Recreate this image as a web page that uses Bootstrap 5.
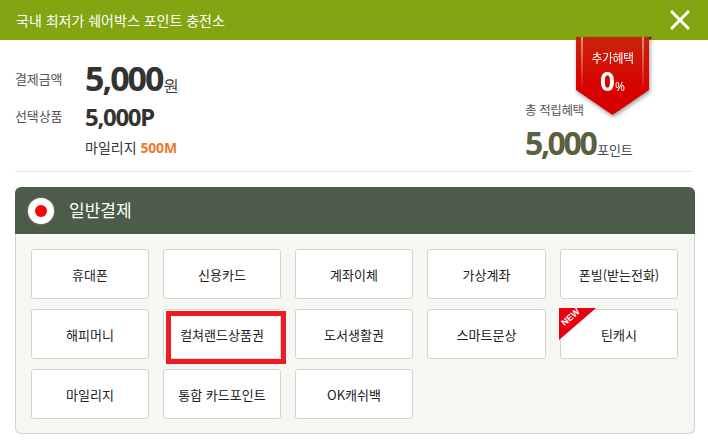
<!DOCTYPE html>
<html lang="ko">

<head>
    <meta charset="UTF-8">
    <meta name="viewport" content="width=device-width, initial-scale=1.0">
    <title>포인트 충전소</title>
    <link href="https://cdn.jsdelivr.net/npm/bootstrap@5.3.0/dist/css/bootstrap.min.css" rel="stylesheet">
    <style>
        body { font-family: "Noto Sans CJK KR", "Noto Sans", sans-serif; background: #fff; color: #333; overflow: hidden; }
        .top-bar { height: 40px; background: #84a512; padding: 0 16px; color: #fff; font-size: 14px; }
        .close-x { width: 20px; height: 20px; margin-right: 2px; display: block; }
        .summary { height: 132px; margin: 0 16px 0 15px; border-bottom: 1px solid #e3e3e3; padding-top: 18px; }
        .sum-label { width: 70px; font-size: 13px; color: #555; letter-spacing: -.1px; line-height: 18px; margin-top: -6px; }
        .amount-big { font-family: "Noto Sans", sans-serif; font-size: 34px; font-weight: 700; letter-spacing: -2px; line-height: 40px; color: #333; }
        .amount-unit { font-size: 16px; font-weight: 300; letter-spacing: 0; margin-left: 1px; }
        .amount-row-2 { margin-top: -3px; }
        .amount-row-2 .sum-label { margin-top: -2px; }
        .amount-mid { font-family: "Noto Sans", sans-serif; font-size: 24px; font-weight: 700; letter-spacing: -1.3px; line-height: 30px; color: #333; }
        .mileage { font-size: 14px; line-height: 20px; margin-left: 70px; margin-top: 5px; color: #333; }
        .mileage b { font-family: "Noto Sans", sans-serif; color: #e67e31; font-weight: 700; font-size: 14px; letter-spacing: -.2px; }
        .total-box { position: absolute; left: 525px; top: 100px; color: #555; }
        .total-label { font-size: 12.5px; line-height: 20px; letter-spacing: -.4px; }
        .total-num { font-family: "Noto Sans", sans-serif; font-size: 32px; font-weight: 700; letter-spacing: -2.4px; line-height: 40px; color: #5a6040; margin-top: 3px; }
        .total-num span { font-family: "Noto Sans CJK KR", sans-serif; font-size: 13px; font-weight: 400; letter-spacing: -.2px; color: #444; margin-left: 2px; }
        .ribbon { position: absolute; left: 576px; top: 37px; width: 73px; height: 78px; filter: drop-shadow(1px 2px 2px rgba(0,0,0,.4)); }
        .ribbon::after { content: ""; position: absolute; left: 100%; top: 0; border-top: 3px solid #5a1a0a; border-right: 3px solid transparent; }
        .ribbon-shape { position: relative; width: 100%; height: 100%; background: linear-gradient(#c9240a, #d90000 70%); clip-path: polygon(0 0, 100% 0, 100% 68%, 50% 100%, 0 68%); color: #fff; text-align: center; }
        .ribbon-shape::before { content: ""; position: absolute; left: 5px; right: 5px; top: 0; height: 50px; border-left: 2px solid; border-right: 2px solid; border-image: linear-gradient(rgba(255,255,255,.5), rgba(255,255,255,.05)) 1; }
        .ribbon-title { font-size: 12px; line-height: 16px; padding-top: 13px; letter-spacing: -.6px; }
        .ribbon-num { font-family: "Noto Sans", sans-serif; font-size: 26px; font-weight: 700; line-height: 30px; }
        .ribbon-num small { font-size: 12px; font-weight: 400; }
        .pay-panel { margin: 15px 13px 0 15px; }
        .pay-head { height: 47px; background: #4d5b4b; border-radius: 6px 6px 0 0; color: #fff; font-size: 17px; padding-left: 13px; gap: 15px; }
        .pay-head span { margin-top: -2px; }
        .red-dot { width: 26px; height: 26px; border-radius: 50%; background: #fff; box-shadow: 0 0 2px #aaa; }
        .red-dot i { display: block; width: 12px; height: 12px; border-radius: 50%; background: #f00; }
        .pay-body { background: #f6f6f2; border: 1px solid #d4d4cb; border-top: 0; border-radius: 0 0 6px 6px; padding: 15px 15px 14px; display: grid; grid-template-columns: 118px 118px 118px 119px 118px; gap: 10px 14px; }
        .pay-btn { position: relative; height: 50px; background: #fff; border: 1px solid #d4d4cb; border-radius: 3px; font-size: 13px; color: #222; padding: 1px 0 0; }
        .mark-red { position: absolute; left: 2px; top: 1px; width: 120px; height: 53px; border: 5px solid #ed1c24; pointer-events: none; }
        .new-tag { position: absolute; left: -2px; top: -2px; width: 37px; height: 32px; background: #e60012; clip-path: polygon(0 0, 100% 0, 0 100%); }
        .new-tag span { position: absolute; left: 1px; top: 3px; font-family: "Liberation Sans", sans-serif; font-size: 9px; font-weight: 700; color: #fff; line-height: 12px; transform: rotate(-41deg); }
    </style>
</head>

<body>
    <div class="top-bar d-flex align-items-center justify-content-between">
        <span>국내 최저가 쉐어박스 포인트 충전소</span>
        <svg class="close-x" viewBox="0 0 20 20"><path d="M1 1 L19 19 M19 1 L1 19" stroke="#fff" stroke-width="3" fill="none"/></svg>
    </div>

    <div class="summary">
        <div class="d-flex align-items-center">
            <div class="sum-label">결제금액</div>
            <div class="amount-big">5,000<span class="amount-unit">원</span></div>
        </div>
        <div class="d-flex align-items-center amount-row-2">
            <div class="sum-label">선택상품</div>
            <div class="amount-mid">5,000P</div>
        </div>
        <div class="mileage">마일리지 <b>500M</b></div>
    </div>

    <div class="total-box">
        <div class="total-label">총 적립혜택</div>
        <div class="total-num">5,000<span>포인트</span></div>
    </div>

    <div class="ribbon">
        <div class="ribbon-shape">
            <div class="ribbon-title">추가혜택</div>
            <div class="ribbon-num">0<small>%</small></div>
        </div>
    </div>

    <div class="pay-panel">
        <div class="pay-head d-flex align-items-center">
            <div class="red-dot d-flex align-items-center justify-content-center"><i></i></div>
            <span>일반결제</span>
        </div>
        <div class="pay-body">
            <button class="pay-btn" type="button">휴대폰</button>
            <button class="pay-btn" type="button">신용카드</button>
            <button class="pay-btn" type="button">계좌이체</button>
            <button class="pay-btn" type="button">가상계좌</button>
            <button class="pay-btn" type="button">폰빌(받는전화)</button>
            <button class="pay-btn" type="button">해피머니</button>
            <button class="pay-btn" type="button">컬쳐랜드상품권<span class="mark-red"></span></button>
            <button class="pay-btn" type="button">도서생활권</button>
            <button class="pay-btn" type="button">스마트문상</button>
            <button class="pay-btn" type="button"><span class="new-tag"><span>NEW</span></span>틴캐시</button>
            <button class="pay-btn" type="button">마일리지</button>
            <button class="pay-btn" type="button">통합 카드포인트</button>
            <button class="pay-btn" type="button">OK캐쉬백</button>
        </div>
    </div>

    <script src="https://cdn.jsdelivr.net/npm/bootstrap@5.3.0/dist/js/bootstrap.bundle.min.js"></script>
</body>

</html>
